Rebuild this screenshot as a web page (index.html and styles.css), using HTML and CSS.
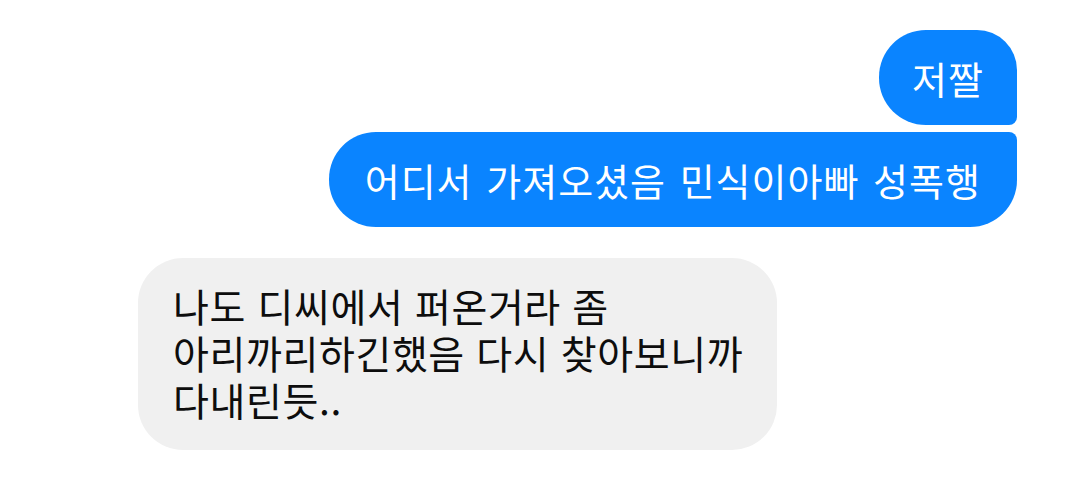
FILE: index.html
```html
<!DOCTYPE html>
<html lang="ko">
<head>
<meta charset="utf-8">
<link rel="stylesheet" href="styles.css">
</head>
<body>
<div class="chat">
  <div class="bubble me first">저짤</div>
  <div class="bubble me last">어디서 가져오셨음 민식이아빠 성폭행</div>
  <div class="bubble them">
    <div class="line">나도 디씨에서 퍼온거라 좀</div>
    <div class="line">아리까리하긴했음 다시 찾아보니까</div>
    <div class="line">다내린듯..</div>
  </div>
</div>
</body>
</html>
```
FILE: styles.css
```css
html, body {
  margin: 0;
  background: #ffffff;
}
.chat {
  display: flex;
  flex-direction: column;
  align-items: flex-start;
  padding: 30px 62px 0 138px;
  font-family: "Noto Sans CJK KR", "Noto Sans", sans-serif;
}
.bubble {
  box-sizing: border-box;
  white-space: nowrap;
}
.me {
  align-self: flex-end;
  background: #0a84ff;
  color: #ffffff;
  font-size: 38px;
  line-height: 45px;
  height: 95px;
  letter-spacing: 1px;
}
.first {
  padding: 25px 33px;
  border-radius: 47px 40px 8px 47px;
}
.last {
  margin-top: 7px;
  border-radius: 47px 8px 47px 47px;
  padding: 25px 36px;
  word-spacing: 2px;
}
.them {
  margin-top: 31px;
  background: #f0f0f0;
  color: #0d0d0d;
  font-size: 39px;
  line-height: 47px;
  letter-spacing: 0.6px;
  width: 639px;
  height: 192px;
  padding: 24px 30px 25px 35px;
  border-radius: 45px;
  display: flex;
  flex-direction: column;
}
.line {
  height: 47px;
}
```
